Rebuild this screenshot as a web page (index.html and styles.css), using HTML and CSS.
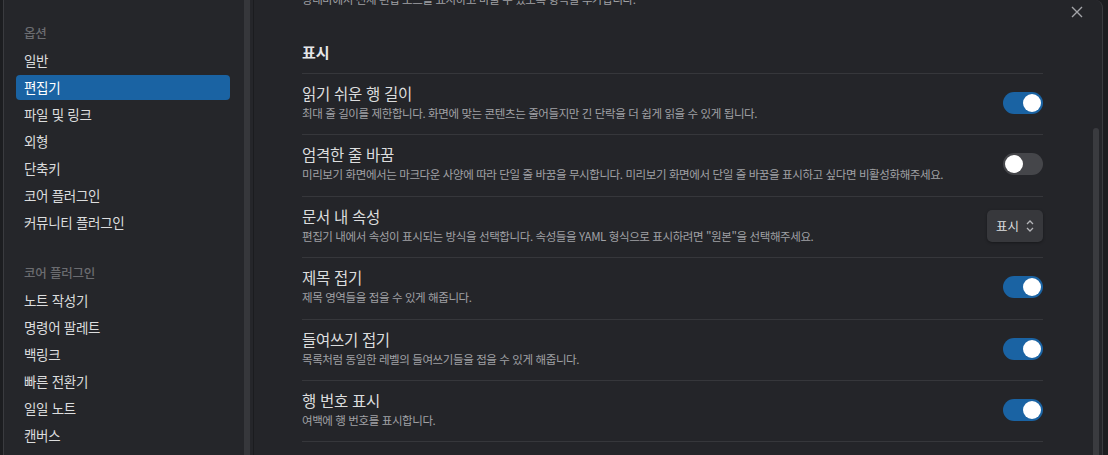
FILE: index.html
```html
<!DOCTYPE html>
<html lang="ko">
<head>
  <meta charset="utf-8">
  <title>설정 - 편집기</title>
  <link rel="stylesheet" href="styles.css">
</head>
<body>
  <div class="modal">
    <div class="sidebar">
      <div class="side-list">
        <div class="side-heading">옵션</div>
        <div class="side-item">일반</div>
        <div class="side-item active">편집기</div>
        <div class="side-item">파일 및 링크</div>
        <div class="side-item">외형</div>
        <div class="side-item">단축키</div>
        <div class="side-item">코어 플러그인</div>
        <div class="side-item">커뮤니티 플러그인</div>

        <div class="side-heading group">코어 플러그인</div>
        <div class="side-item">노트 작성기</div>
        <div class="side-item">명령어 팔레트</div>
        <div class="side-item">백링크</div>
        <div class="side-item">빠른 전환기</div>
        <div class="side-item">일일 노트</div>
        <div class="side-item">캔버스</div>
      </div>
      <div class="side-scroll"></div>
    </div>

    <div class="content">
      <div class="close">
        <svg width="12" height="12" viewBox="0 0 12 12"><path d="M1 1 L11 11 M11 1 L1 11" stroke="#a3a4a8" stroke-width="1.4" fill="none"/></svg>
      </div>
      <div class="settings">
        <div class="cut">상태바에서 전체 편집 모드를 표시하고 바꿀 수 있도록 항목을 추가합니다.</div>
        <div class="section-heading">표시</div>

        <div class="setting">
          <div class="info">
            <div class="name">읽기 쉬운 행 길이</div>
            <div class="desc">최대 줄 길이를 제한합니다. 화면에 맞는 콘텐츠는 줄어들지만 긴 단락을 더 쉽게 읽을 수 있게 됩니다.</div>
          </div>
          <div class="toggle on"><span class="knob"></span></div>
        </div>

        <div class="setting">
          <div class="info">
            <div class="name">엄격한 줄 바꿈</div>
            <div class="desc">미리보기 화면에서는 마크다운 사양에 따라 단일 줄 바꿈을 무시합니다. 미리보기 화면에서 단일 줄 바꿈을 표시하고 싶다면 비활성화해주세요.</div>
          </div>
          <div class="toggle"><span class="knob"></span></div>
        </div>

        <div class="setting">
          <div class="info">
            <div class="name">문서 내 속성</div>
            <div class="desc">편집기 내에서 속성이 표시되는 방식을 선택합니다. 속성들을 YAML 형식으로 표시하려면 "원본"을 선택해주세요.</div>
          </div>
          <div class="dropdown">
            <span>표시</span>
            <svg width="10" height="14" viewBox="0 0 10 14"><path d="M2 5 L5 2 L8 5 M2 9 L5 12 L8 9" stroke="#b4b5b9" stroke-width="1.3" fill="none"/></svg>
          </div>
        </div>

        <div class="setting">
          <div class="info">
            <div class="name">제목 접기</div>
            <div class="desc">제목 영역들을 접을 수 있게 해줍니다.</div>
          </div>
          <div class="toggle on"><span class="knob"></span></div>
        </div>

        <div class="setting">
          <div class="info">
            <div class="name">들여쓰기 접기</div>
            <div class="desc">목록처럼 동일한 레벨의 들여쓰기들을 접을 수 있게 해줍니다.</div>
          </div>
          <div class="toggle on"><span class="knob"></span></div>
        </div>

        <div class="setting">
          <div class="info">
            <div class="name">행 번호 표시</div>
            <div class="desc">여백에 행 번호를 표시합니다.</div>
          </div>
          <div class="toggle on"><span class="knob"></span></div>
        </div>
      </div>
      <div class="vscroll"><div class="thumb"></div></div>
    </div>
  </div>
</body>
</html>
```

FILE: styles.css
```css
body {
  margin: 0;
  height: 455px;
  overflow: hidden;
  background-color: #1c1d20;
  font-family: "Noto Sans CJK KR", "Noto Sans", sans-serif;
  color: #dcddde;
}

.modal {
  display: flex;
  margin-left: 3px;
  width: 1098px;
  height: 455px;
  border-left: 1px solid #3a3b3f;
  border-right: 1px solid #3a3b3f;
  border-top-right-radius: 8px;
  background-color: #242529;
  overflow: hidden;
}

/* sidebar */
.sidebar {
  display: flex;
  width: 249px;
  background-color: #25262a;
  border-right: 1px solid #1b1c1f;
}

.side-list {
  flex: 1;
  padding: 23px 14px 0 12px;
}

.side-heading {
  height: 20px;
  line-height: 20px;
  padding-left: 8px;
  margin-bottom: 5px;
  font-size: 12.5px;
  font-weight: 500;
  color: #6b6c70;
  letter-spacing: -0.2px;
}

.side-heading.group {
  margin-top: 28px;
}

.side-item {
  height: 25px;
  line-height: 25px;
  padding-left: 8px;
  margin-bottom: 2px;
  font-size: 13.5px;
  letter-spacing: -0.3px;
  color: #dcddde;
  border-radius: 4px;
}

.side-item.active {
  background-color: #1a63a3;
  color: #ffffff;
}

.side-scroll {
  width: 6px;
  margin-right: 3px;
  background-color: #36373b;
}

/* content */
.content {
  position: relative;
  flex: 1;
  display: flex;
}

.close {
  position: absolute;
  top: 6px;
  right: 19px;
  width: 12px;
  height: 12px;
}

.close svg {
  display: block;
}

.settings {
  width: 741px;
  margin-left: 48px;
  margin-top: -10px;
}

.cut {
  height: 18px;
  line-height: 18px;
  font-size: 11.5px;
  letter-spacing: -0.4px;
  color: #a0a1a5;
}

.section-heading {
  margin-top: 33px;
  height: 22px;
  line-height: 22px;
  padding-bottom: 10px;
  border-bottom: 1px solid #36373b;
  font-size: 15px;
  font-weight: 700;
  color: #e6e7e9;
}

.setting {
  display: flex;
  align-items: center;
  padding: 9px 0 11.4px;
  border-bottom: 1px solid #36373b;
}

.info {
  flex: 1;
}

.name {
  height: 21px;
  line-height: 21px;
  font-size: 15.5px;
  letter-spacing: -0.3px;
  color: #dcddde;
}

.desc {
  height: 19px;
  line-height: 19px;
  font-size: 11.5px;
  letter-spacing: -0.4px;
  color: #a0a1a5;
  white-space: nowrap;
}

.toggle {
  display: flex;
  align-items: center;
  width: 40px;
  height: 22px;
  padding: 0 2px;
  box-sizing: border-box;
  border-radius: 11px;
  background-color: #45464a;
}

.toggle.on {
  justify-content: flex-end;
  background-color: #1a63a3;
}

.knob {
  width: 18px;
  height: 18px;
  border-radius: 50%;
  background-color: #ffffff;
}

.dropdown {
  display: flex;
  align-items: center;
  gap: 6px;
  height: 32px;
  padding: 0 8px 0 9px;
  box-sizing: border-box;
  border-radius: 5px;
  background-color: #37383c;
  box-shadow: 0 1px 3px rgba(0, 0, 0, 0.35);
  font-size: 12.5px;
  color: #dcddde;
}

.vscroll {
  margin-left: auto;
  margin-right: 3px;
  width: 6px;
}

.thumb {
  margin-top: 128px;
  height: 340px;
  border-radius: 3px;
  background-color: #3a3b3f;
}
```
